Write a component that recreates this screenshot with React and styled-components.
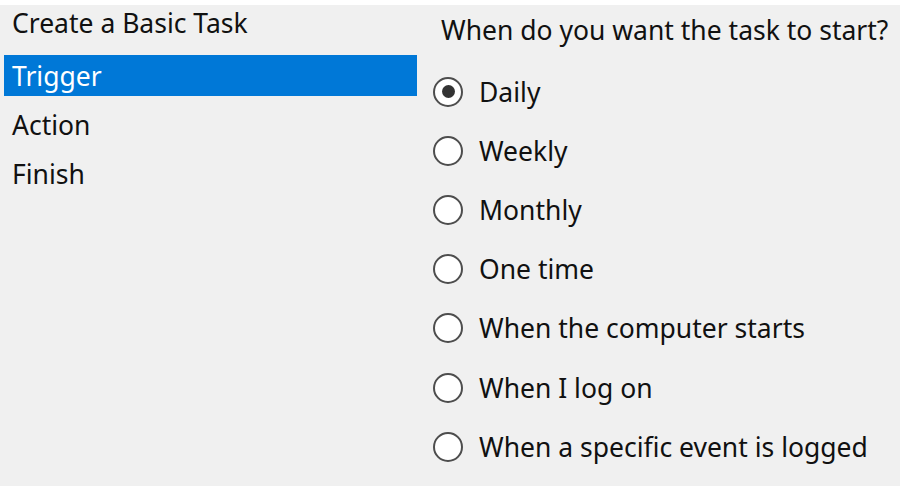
import React from "react";
import styled, { createGlobalStyle } from "styled-components";

const GlobalStyle = createGlobalStyle`
   html, body {
      margin: 0;
      padding: 0;
      background: #ffffff;
   }
   body {
      font-family: "Noto Sans", "Open Sans", sans-serif;
   }
`;

const Window = styled.div`
   margin-top: 5px;
   width: 900px;
   height: 481px;
   background: #f0f0f0;
   display: flex;
   color: #111;
`;

const Steps = styled.ul`
   list-style: none;
   margin: 0;
   padding: 0 0 0 4px;
   width: 413px;
   display: flex;
   flex-direction: column;
`;

const Step = styled.li`
   box-sizing: border-box;
   height: ${(p) => (p.$first ? "50px" : "41px")};
   margin-bottom: ${(p) => (p.$first ? "0" : "8px")};
   padding-left: 8px;
   padding-bottom: ${(p) => (p.$first ? "14px" : "0")};
   display: flex;
   align-items: center;
   font-size: 26.5px;
   white-space: nowrap;
   background: ${(p) => (p.$active ? "#0078d7" : "transparent")};
   color: ${(p) => (p.$active ? "#ffffff" : "#111111")};
`;

const Content = styled.section`
   flex: 1;
   padding-left: 3px;
   display: flex;
   flex-direction: column;
`;

const Question = styled.div`
   height: 50px;
   padding-left: 21px;
   display: flex;
   align-items: center;
   font-size: 26.5px;
   white-space: nowrap;
`;

const Options = styled.div`
   margin-top: 7px;
   display: flex;
   flex-direction: column;
`;

const Option = styled.label`
   height: 59.2px;
   display: flex;
   align-items: center;
   gap: 16px;
   padding-left: 13px;
   font-size: 26.5px;
   white-space: nowrap;
`;

const Radio = styled.span`
   box-sizing: border-box;
   flex: none;
   width: 30px;
   height: 30px;
   border-radius: 50%;
   border: 2.5px solid #4d4d4d;
   background: #ffffff;
   display: flex;
   align-items: center;
   justify-content: center;

   &::after {
      content: "";
      width: 13px;
      height: 13px;
      border-radius: 50%;
      background: ${(p) => (p.$checked ? "#333333" : "transparent")};
   }
`;

const steps = ["Create a Basic Task", "Trigger", "Action", "Finish"];

const options = [
   "Daily",
   "Weekly",
   "Monthly",
   "One time",
   "When the computer starts",
   "When I log on",
   "When a specific event is logged",
];

export default function App() {
   return (
      <>
         <GlobalStyle />
         <Window>
            <Steps>
               {steps.map((s, i) => (
                  <Step key={s} $first={i === 0} $active={s === "Trigger"}>
                     {s}
                  </Step>
               ))}
            </Steps>
            <Content>
               <Question>When do you want the task to start?</Question>
               <Options>
                  {options.map((o) => (
                     <Option key={o}>
                        <Radio $checked={o === "Daily"} />
                        {o}
                     </Option>
                  ))}
               </Options>
            </Content>
         </Window>
      </>
   );
}
